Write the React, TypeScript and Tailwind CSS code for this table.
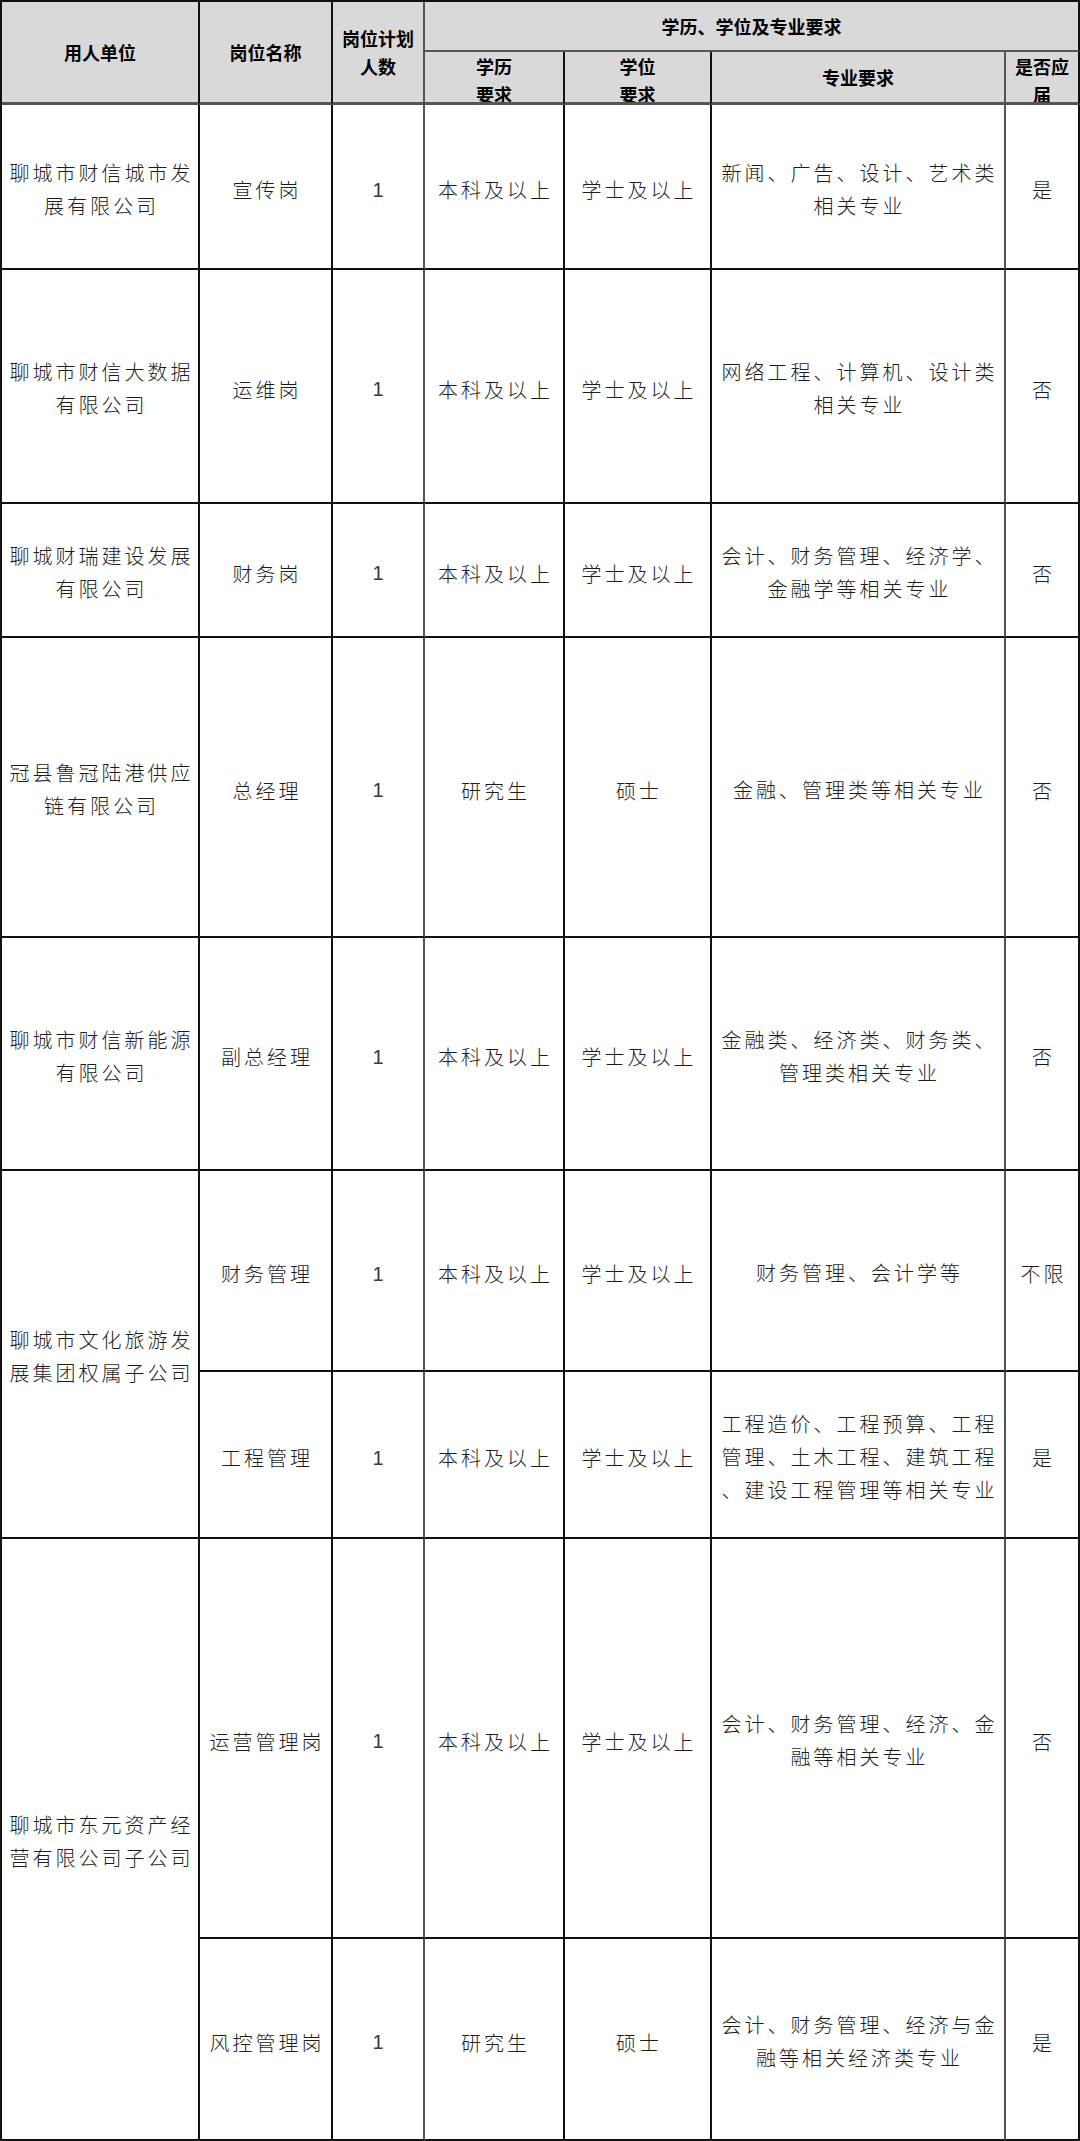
import React from "react";

const BODY = "font-['Noto_Sans_CJK_SC',sans-serif]";

function Lines({ lines }: { lines: string[] }) {
  return (
    <div className="flex flex-col items-center">
      {lines.map((l, i) => (
        <span key={i} className="block whitespace-nowrap leading-[33px] mr-[-3px]">
          {l}
        </span>
      ))}
    </div>
  );
}

function Cell({
  children,
  className = "",
}: {
  children?: React.ReactNode;
  className?: string;
}) {
  return (
    <div
      className={
        "flex items-center justify-center text-center border-r-2 border-b-2 border-[#111] overflow-hidden " +
        className
      }
    >
      {children}
    </div>
  );
}

type Row = {
  pos: string;
  edu: string;
  deg: string;
  major: string[];
  fresh: string;
};

function BodyCells({ r }: { r: Row }) {
  return (
    <>
      <Cell className="pt-[6px]">
        <Lines lines={[r.pos]} />
      </Cell>
      <Cell className="border-r-[#555] pt-[6px]">
        <span className="font-['Liberation_Sans',sans-serif] font-normal text-[20px] text-[#3a3a3a] tracking-normal">1</span>
      </Cell>
      <Cell className="pt-[6px]">
        <Lines lines={[r.edu]} />
      </Cell>
      <Cell className="pt-[6px]">
        <Lines lines={[r.deg]} />
      </Cell>
      <Cell className="border-r-[#555] pt-[4px]">
        <Lines lines={r.major} />
      </Cell>
      <Cell className="pt-[6px]">
        <Lines lines={[r.fresh]} />
      </Cell>
    </>
  );
}

const HEAD = "bg-[#d9d9d9] font-bold text-[18px] tracking-normal text-black";

export default function App() {
  return (
    <div className="w-[1080px] min-h-[2141px] bg-white">
      <div
        className={
          "grid w-[1080px] border-l-2 border-t-2 border-[#111] text-[#1c1c1c] text-[20px] tracking-[3px] font-light " +
          BODY +
          " grid-cols-[198px_133px_92px_140px_147px_294px_74px] grid-rows-[50px_53px_165px_234px_134px_300px_233px_201px_167px_400px_202px]"
        }
      >
        {/* Header */}
        <Cell className={"row-span-2 border-b-[3px] border-b-[#555] " + HEAD}>用人单位</Cell>
        <Cell className={"row-span-2 border-b-[3px] border-b-[#555] " + HEAD}>岗位名称</Cell>
        <Cell className={"row-span-2 border-b-[3px] border-b-[#555] border-r-[#555] leading-[28px] " + HEAD}>
          <div>
            岗位计划
            <br />
            人数
          </div>
        </Cell>
        <Cell className={"col-span-4 border-b-[#555] " + HEAD}>学历、学位及专业要求</Cell>
        <Cell className={"border-b-[3px] border-b-[#555] leading-[28px] items-start " + HEAD}>
          <div>
            学历
            <br />
            要求
          </div>
        </Cell>
        <Cell className={"border-b-[3px] border-b-[#555] leading-[28px] items-start " + HEAD}>
          <div>
            学位
            <br />
            要求
          </div>
        </Cell>
        <Cell className={"border-b-[3px] border-b-[#555] border-r-[#555] " + HEAD}>专业要求</Cell>
        <Cell className={"border-b-[3px] border-b-[#555] leading-[28px] items-start " + HEAD}>
          <div>
            是否应
            <br />
            届
          </div>
        </Cell>

        {/* Row 1 */}
        <Cell className="pt-[4px]">
          <Lines lines={["聊城市财信城市发", "展有限公司"]} />
        </Cell>
        <BodyCells
          r={{
            pos: "宣传岗",
            edu: "本科及以上",
            deg: "学士及以上",
            major: ["新闻、广告、设计、艺术类", "相关专业"],
            fresh: "是",
          }}
        />

        {/* Row 2 */}
        <Cell className="pt-[4px]">
          <Lines lines={["聊城市财信大数据", "有限公司"]} />
        </Cell>
        <BodyCells
          r={{
            pos: "运维岗",
            edu: "本科及以上",
            deg: "学士及以上",
            major: ["网络工程、计算机、设计类", "相关专业"],
            fresh: "否",
          }}
        />

        {/* Row 3 */}
        <Cell className="pt-[4px]">
          <Lines lines={["聊城财瑞建设发展", "有限公司"]} />
        </Cell>
        <BodyCells
          r={{
            pos: "财务岗",
            edu: "本科及以上",
            deg: "学士及以上",
            major: ["会计、财务管理、经济学、", "金融学等相关专业"],
            fresh: "否",
          }}
        />

        {/* Row 4 */}
        <Cell className="pt-[4px]">
          <Lines lines={["冠县鲁冠陆港供应", "链有限公司"]} />
        </Cell>
        <BodyCells
          r={{
            pos: "总经理",
            edu: "研究生",
            deg: "硕士",
            major: ["金融、管理类等相关专业"],
            fresh: "否",
          }}
        />

        {/* Row 5 */}
        <Cell className="pt-[4px]">
          <Lines lines={["聊城市财信新能源", "有限公司"]} />
        </Cell>
        <BodyCells
          r={{
            pos: "副总经理",
            edu: "本科及以上",
            deg: "学士及以上",
            major: ["金融类、经济类、财务类、", "管理类相关专业"],
            fresh: "否",
          }}
        />

        {/* Row 6 */}
        <Cell className="row-span-2 pt-[4px]">
          <Lines lines={["聊城市文化旅游发", "展集团权属子公司"]} />
        </Cell>
        <BodyCells
          r={{
            pos: "财务管理",
            edu: "本科及以上",
            deg: "学士及以上",
            major: ["财务管理、会计学等"],
            fresh: "不限",
          }}
        />
        <BodyCells
          r={{
            pos: "工程管理",
            edu: "本科及以上",
            deg: "学士及以上",
            major: ["工程造价、工程预算、工程", "管理、土木工程、建筑工程", "、建设工程管理等相关专业"],
            fresh: "是",
          }}
        />

        {/* Row 7 */}
        <Cell className="row-span-2 pt-[4px]">
          <Lines lines={["聊城市东元资产经", "营有限公司子公司"]} />
        </Cell>
        <BodyCells
          r={{
            pos: "运营管理岗",
            edu: "本科及以上",
            deg: "学士及以上",
            major: ["会计、财务管理、经济、金", "融等相关专业"],
            fresh: "否",
          }}
        />
        <BodyCells
          r={{
            pos: "风控管理岗",
            edu: "研究生",
            deg: "硕士",
            major: ["会计、财务管理、经济与金", "融等相关经济类专业"],
            fresh: "是",
          }}
        />
      </div>
    </div>
  );
}
